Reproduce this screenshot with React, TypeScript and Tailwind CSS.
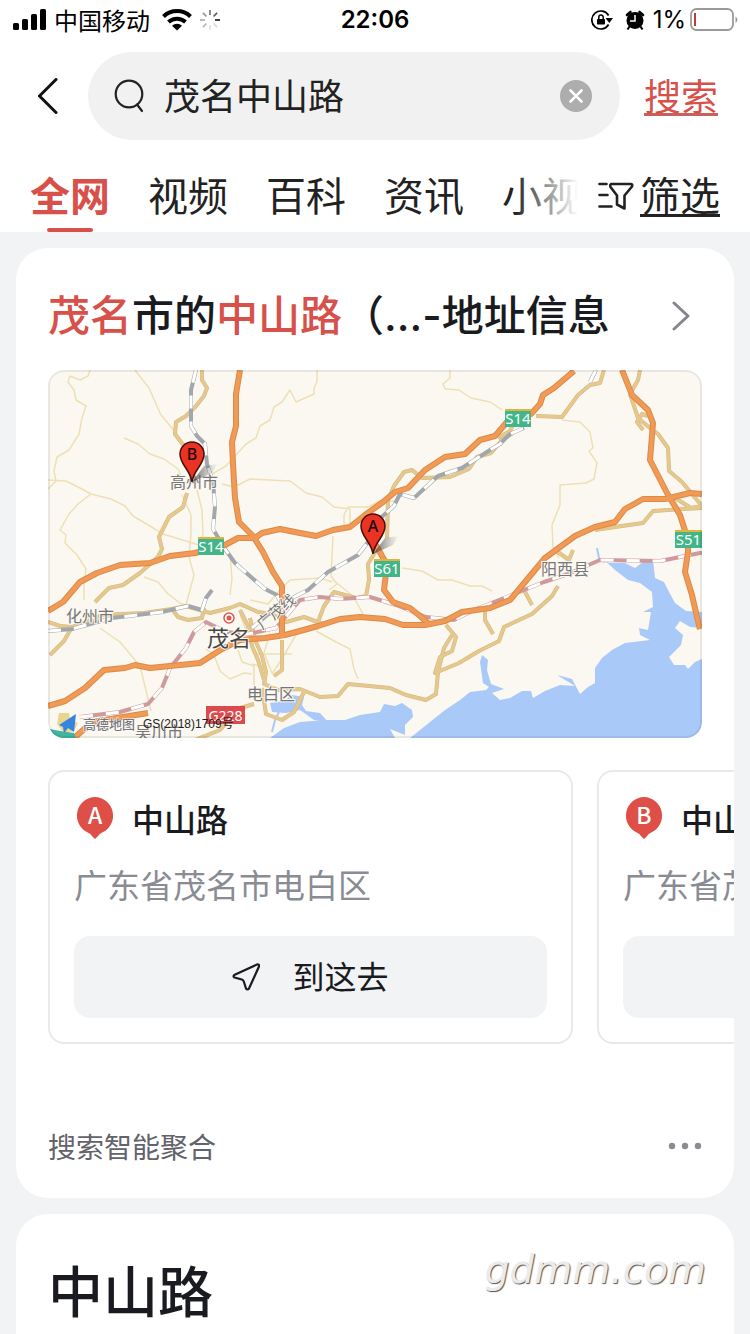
import type { ReactNode } from "react";

interface Place {
  id: string;
  name: string;
  address: string;
}

const PLACES: Place[] = [
  { id: "A", name: "中山路", address: "广东省茂名市电白区" },
  { id: "B", name: "中山路", address: "广东省茂名市高州市" },
];

const TABS = ["全网", "视频", "百科", "资讯", "小视频"];

// map geometry, drawn thin to thick
const MINOR_ROADS = [
  "M70 376l-2 6 6 8 2 10 10 6-4 12-3 16-10 16-12 7-3 14 2 10-8 8M70 376l10 4 8-4 2-6",
  "M135 370l14 18 12 27 15 18 4 8M124 438l14 6 12 10 14 5 14 10 6 14",
  "M48 480l18 1 14 7 11 6 20 5 14 7 8 10 22 13 9 6M91 494l-13 10-9 10-9 16 6 5-1 8 12 12 9 14-2 15 0 16",
  "M182 495l9 20v18l-2 24 5 18-8 30M197 490l5 20 1 25-4 10-36-11",
  "M317 370v12l-3 6v6l-18 8-6-12-8 12-8 5-4 13-10 6-4 12-10 6-20 22-14 8",
  "M222 484l12 3 16-8 40 2 16 12 16 4 12 10 16 2v20h-6v-14l4-8h20l12-6 18 0",
  "M450 370v8l-7 6 2 5 14 1 12 8 19 4 12 8M562 420l18 2 10 10 3 16-4 3 8 12-3 16-8 4-26 2 0 20-8 20 1 22 6 11",
  "M333 536l-2 40 6 8-8 6M333 580l20 16 10 18M402 568l20 3 16 9 14 0 18 6 12 0 10 5",
  "M144 577l14 5 10 12 12 9 12 6M100 628l20 14 20 24 11 45M220 540l10 14 2 25-2 16",
  "M206 649l8 6 6 16 10 8 14-6 8 1M250 600l18 4 10-12 12-12 30-2 12 4M238 650l4 12 12 4v34",
  "M270 633l-6 20 8 20M300 628l-20 34-8 12M256 654h36M316 631l22 12 12 6 4 20 4 10M252 664l14 4v16M240 615l8 20",
];

const COUNTY_ROADS = [
  "M202 370l0 10 5 8-3 8-8 10-10 10-10 6-1 12 9 12 5 8",
  "M187 493l-4 14-14 10-10 20 3 12-4 8-18 16-17 12-14 3-14 14",
  "M48 622l12 4 12 1-8 14-14 14M72 627l30-12 42-2 28-4 6 8 10 3 14-2 2-10",
  "M172 609l14-3 24 7 20-5 10-4 18 8 14 2 14 8 18-5 22 8",
  "M250 618l6 24 6 14 4 16-2 12 14 6 22-1 20 8 18-1 10-12 42 4 16 7 20 5 10-6 2-22 6-24 8-13",
  "M240 610l8 16 4 20 6 14 6 20M282 640l0 30-8 6M262 688l4 26 16 6 12-8 10-20",
  "M318 622l6-16 10-14 22 6 10-2 3-16-1-16 8-13M387 538l1-38 6-14 10-14 8-2 10 8 28-1 19-8 8-12 14-4 12-14 10-6",
  "M498 438l12-7 6-12M536 416l26 1 16-22 12-10 10-2 4-13M640 370l-2 10-8 14 8 24 12 10 8 6 10 14 1 22M643 430l-6-8 5-8 6 2",
  "M668 470l14 12 20 24M675 498l16 10 11-2",
  "M595 530l20-3 28-4 10-12 30-2 19-1M446 625l10 12-4 14-12 6-5 16 24-10 20-12 20-10 5-14 28-13 20-18 6-10",
  "M523 588l9 17M485 610v10l8 14M555 550l14 10 4-10",
  "M190 742l30-12 20-22 14-4",
];

const HIGHWAYS = [
  "M240 370l-4 24v32l-4 16 1 22 2 34 4 24 14 14 10 16 10 20 9 14v52",
  "M48 611l15-9 17-20 17-9 23-8 30-2 20-7 25-3 30-8 13-7h17l7-5 18-4 20 4 16 3 17-6 17-3 15-12 18-13 12-10 13-4 17-18 20-13 20-3 15-14 15-4 12-14 24-8 9-10 3-9 11-7 20-17",
  "M622 370l10 25 16 15 5 13-3 37 17 33 13 22 8 25v12l-3 20 7 23 5 22 3 12",
  "M702 494l-12-1-25 6h-22l-18 10-10 13-20 5-20 9-15 11-15 11-20 24-15 18-20 8-28 4-17 9-20 4h-22l-18-6-25-2-20 2-22 7-18 5-15 4-20 3-25 2-18 9-22 14-20 2-30 3-15-3-10 3-21 2-19 18-20 13-17 5",
  "M376 545l11 20-3 25 9 12 17 6 10 8 10 9",
  "M72 740l20-18 56-9",
];

const RAILS = [
  { d: "M196 370l-5 20v36l6 10 8 8 2 20 6 18 2 25-2 22 12 20 10 14 16 14 14 12 12 6 8 16", color: "#a2a7ad" },
  { d: "M48 631l24-2 40-11 50-6 26-6 14 4 4-12 6-8M252 628l28-24 28-14 20-18 30-17 14-18 4-15 18-16 6-12 14 4 24-22 24-8 28-18 10-6 10-10 14-6M590 382l6-12", color: "#a2a7ad" },
  { d: "M80 717l40-5 28-8 14-16 8-20 16-20 8-16 12-10 20 10 22 2 28-6 24-28 20-3 20 2 30-2 26 8 30 12 28 3 20-10 30-12 40-16 24-8 32-14 60 1 40-8 40-1", color: "#cf9a9c" },
];

const SEA =
  "M270 738L284 728 300 722 325 720 345 720 360 715 380 712 384 704 395 706 402 703 412 710 413 717 405 725 405 735 390 729 395 738 410 738 420 730 430 722 445 710 460 700 470 692 486 690 489 687 483 683 480 662 482 655 488 660 487 670 491 684 504 689 492 693 500 700 510 698 522 691 531 691 533 698 545 691 560 685 575 686 557 675 572 679 580 694 588 687 595 683 595 668 602 658 612 650 625 643 650 640 640 635 639 628 648 630 651 612 643 612 653 607 652 592 640 583 628 580 615 570 600 556 609 563 625 563 635 568 643 562 653 560 655 578 664 582 668 590 675 603 686 611 702 612 702 628 690 627 680 621 675 628 683 635 681 645 669 657 674 665 685 665 688 669 695 662 702 659V738Z";

function Shield({ x, y, label, color, w = 26 }: { x: number; y: number; label: string; color: string; w?: number }) {
  return (
    <g>
      <rect x={x} y={y} width={w} height={18} fill={color} />
      {w < 30 && <rect x={x} y={y} width={w} height={2} fill="#e3b33c" />}
      <text x={x + w / 2} y={y + 15} textAnchor="middle" fontSize={w < 30 ? 15 : 14} fill="#fff">
        {label}
      </text>
    </g>
  );
}

function MapPin({ x, y, label }: { x: number; y: number; label: string }) {
  return (
    <g transform={`translate(${x} ${y})`}>
      <path d="M0 0L12-16 26-18 20-9Z" fill="url(#pinShadow)" />
      <path d="M0 0C-2-13-12-17-12-28a12 12 0 0 1 24 0C12-17 2-13 0 0Z" fill="#ea3323" stroke="#4a0c08" strokeWidth="1.5" />
      <text y="-22" textAnchor="middle" fontSize="16" fontWeight="500" fill="#1c0504">
        {label}
      </text>
    </g>
  );
}

function MapView() {
  return (
    <svg
      viewBox="48 370 654 368"
      className="block w-full rounded-2xl font-['Noto_Sans','Noto_Sans_CJK_SC',sans-serif]"
      role="img"
      aria-label="地图"
    >
      <defs>
        <linearGradient id="pinShadow">
          <stop offset="0" stopColor="#444" stopOpacity="0.8" />
          <stop offset="1" stopColor="#777" stopOpacity="0" />
        </linearGradient>
      </defs>
      <rect x="48" y="370" width="654" height="368" fill="#fbf8f1" />
      <path d={SEA} fill="#a9c9f8" />
      <path d="M270 703l14-2 8-6 12 2-2 8 4 6 14 2 8 9-14-2-14-10-14 3-14-1z" fill="#a9c9f8" />
      <path d="M279 712l-4 8-3 12M597 548l2 10 6 4" fill="none" stroke="#a9c9f8" strokeWidth="2" />
      <g fill="none" strokeLinejoin="round">
        <g stroke="#eee0b4" strokeWidth="1.5">
          {MINOR_ROADS.map((d) => <path key={d} d={d} />)}
        </g>
        <g stroke="#d6b877" strokeWidth="4">
          {COUNTY_ROADS.map((d) => <path key={d} d={d} />)}
        </g>
        <g stroke="#e4c88f" strokeWidth="3">
          {COUNTY_ROADS.map((d) => <path key={d} d={d} />)}
        </g>
        {RAILS.map((r) => (
          <g key={r.d}>
            <path d={r.d} stroke={r.color} strokeWidth="4" />
            <path d={r.d} stroke="#fff" strokeWidth="3" strokeDasharray="13 13" />
          </g>
        ))}
        <g stroke="#dd8a48" strokeWidth="6">
          {HIGHWAYS.map((d) => <path key={d} d={d} />)}
        </g>
        <g stroke="#f09a55" strokeWidth="4">
          {HIGHWAYS.map((d) => <path key={d} d={d} />)}
        </g>
      </g>
      <Shield x={505} y={409} label="S14" color="#42b58a" />
      <Shield x={198} y={537} label="S14" color="#42b58a" />
      <Shield x={374} y={559} label="S61" color="#42b58a" />
      <Shield x={675} y={530} label="S51" color="#42b58a" w={27} />
      <Shield x={206} y={706} label="G228" color="#dc4a4c" w={39} />
      <circle cx="229" cy="618" r="5" fill="#fff" stroke="#e0584c" strokeWidth="1.5" />
      <circle cx="229" cy="618" r="2.5" fill="#e0584c" />
      <g fill="#75767a" stroke="#fbf8f0" strokeWidth="2" paintOrder="stroke" fontSize="16">
        <text x="170" y="488">高州市</text>
        <text x="66" y="622">化州市</text>
        <text x="541" y="575">阳西县</text>
        <text x="247" y="700">电白区</text>
        <text x="135" y="738">吴川市</text>
        <text x="207" y="646" fontSize="22" fill="#45464a">茂名</text>
        <text x="262" y="630" fontSize="15" transform="rotate(-39 262 630)">广茂线</text>
      </g>
      <MapPin x={192} y={482} label="B" />
      <MapPin x={373} y={554} label="A" />
      <g>
        <path d="M57 724l2-11h10l1 6 8 4-4 8-10 2z" fill="#e9d68e" />
        <path d="M50 729l10 2 14 2 2 5H55z" fill="#41b5a0" />
        <path d="M59 725l17-11-2 18-6-4-4 5-1-6z" fill="#3584e0" />
        <text x="83" y="729" fontSize="13" fontWeight="500" fill="#77777a" stroke="#fff" strokeWidth="1" paintOrder="stroke">
          高德地图
        </text>
        <text x="143" y="728" fontSize="12" fill="#222" className="font-['Liberation_Sans','Noto_Sans_CJK_SC',sans-serif]">
          GS(2018)1709号
        </text>
      </g>
      <rect x="49" y="371" width="652" height="366" rx="15" fill="none" stroke="#000" strokeOpacity="0.07" strokeWidth="2" />
    </svg>
  );
}

function StatusBar() {
  return (
    <div className="grid h-10 grid-cols-[1fr_auto_1fr] items-center pr-3 pl-3 text-2xl leading-10 text-black">
      <div className="flex items-center gap-2">
        <svg viewBox="0 0 34 22" className="h-[22px] w-[34px]" aria-hidden="true">
          <rect x="1" y="14" width="6" height="7" rx="1.5" />
          <rect x="10" y="10" width="6" height="11" rx="1.5" />
          <rect x="19" y="5" width="6" height="16" rx="1.5" />
          <rect x="28" y="0" width="6" height="21" rx="1.5" />
        </svg>
        <span>中国移动</span>
        <svg viewBox="0 0 30 22" className="ml-1 h-[22px] w-[30px]" aria-hidden="true">
          <path d="M1.500 7.500a19.500 19.500 0 0 1 27 0" fill="none" stroke="#000" strokeWidth="4" />
          <path d="M6.500 13a12.500 12.500 0 0 1 17 0" fill="none" stroke="#000" strokeWidth="4" />
          <path d="M15 21.500l-5-4.800a7.200 7.200 0 0 1 10 0z" />
        </svg>
        <svg viewBox="-10 -10 20 20" className="size-5" aria-hidden="true">
          {[1, 0.15, 0.12, 0.3, 0.35, 0.45, 0.6, 0.7].map((opacity, i) => (
            <path key={i} d="M5 0h5" stroke="#111" strokeWidth="1.600" opacity={opacity} transform={`rotate(${i * 45})`} />
          ))}
        </svg>
      </div>
      <span className="font-[Inter,sans-serif] font-semibold">22:06</span>
      <div className="flex items-center justify-end gap-2">
        <svg viewBox="0 0 22 20" className="h-5 w-[22px]" aria-hidden="true">
          <path d="M17.600 5.500A9 9 0 1 0 17.600 14.500" fill="none" stroke="#000" strokeWidth="1.700" />
          <path d="M14.500 8h7.500l-3.700 5z" />
          <rect x="6" y="9" width="8" height="5.500" rx="0.800" />
          <path d="M7.800 9V7.200a2.200 2.200 0 0 1 4.400 0V9" fill="none" stroke="#000" strokeWidth="1.500" />
        </svg>
        <svg viewBox="0 0 20 20" className="ml-1 size-5" aria-hidden="true">
          <circle cx="10" cy="10.500" r="8.500" />
          <path d="M2 5L5.500 2M18 5L14.500 2" stroke="#000" strokeWidth="2.600" strokeLinecap="round" />
          <path d="M4.500 16.500l-2 3M15.500 16.500l2 3" stroke="#000" strokeWidth="2" />
          <path d="M10 5v6H5" fill="none" stroke="#fff" strokeWidth="1.500" />
        </svg>
        <span className="font-[Inter,sans-serif]">1%</span>
        <svg viewBox="0 0 48 24" className="-ml-1 h-6 w-12" aria-hidden="true">
          <rect x="1" y="1" width="42" height="21" rx="5.500" fill="none" stroke="#9a9a9a" strokeWidth="1.800" />
          <rect x="4" y="5" width="2" height="13" fill="#c03a35" />
          <path d="M45.500 8.500c2.500 1.500 2.500 5 0 6.500z" fill="#9a9a9a" />
        </svg>
      </div>
    </div>
  );
}

function SearchBar() {
  return (
    <form className="flex items-center px-8 pt-3">
      <button type="button" aria-label="返回" className="mr-6 flex size-8 items-center justify-center">
        <svg viewBox="0 0 20 36" className="h-9 w-5" fill="none" stroke="#111" strokeWidth="3" strokeLinecap="round" strokeLinejoin="round">
          <path d="M18 1.500L1.500 18 18 34.500" />
        </svg>
      </button>
      <div className="flex h-[88px] min-w-0 flex-1 items-center rounded-full bg-[#f1f1f1] pr-7 pl-[26px]">
        <svg viewBox="0 0 32 34" className="h-[34px] w-8 shrink-0" fill="none" stroke="#222" strokeWidth="2.200" strokeLinecap="round" aria-hidden="true">
          <circle cx="15" cy="15" r="13.300" />
          <path d="M23 25.500l5 6.500" />
        </svg>
        <input
          aria-label="搜索词"
          defaultValue="茂名中山路"
          className="ml-[18px] h-16 min-w-0 flex-1 bg-transparent pb-1 text-4xl text-[#222] outline-none"
        />
        <button type="button" aria-label="清除" className="shrink-0">
          <svg viewBox="0 0 32 32" className="block size-8">
            <circle cx="16" cy="16" r="16" fill="#adadad" />
            <path d="M10.500 10.500l11 11M21.500 10.500l-11 11" stroke="#fff" strokeWidth="2.600" strokeLinecap="round" />
          </svg>
        </button>
      </div>
      <button type="submit" className="ml-6 border-b-[3px] border-[#c9605a] text-[37px] leading-9 text-[#d8504a]">
        搜索
      </button>
    </form>
  );
}

function TabBar() {
  return (
    <div className="flex h-[92px] items-start px-[30px] text-[40px] leading-[56px] text-[#222]">
      <nav className="relative mr-5 flex h-[92px] min-w-0 flex-1 gap-[38px] overflow-hidden pt-[26px]">
        {TABS.map((tab, i) => (
          <a
            key={tab}
            href="#"
            className={
              i === 0
                ? "flex shrink-0 flex-col items-center justify-between font-bold text-[#d8504a]"
                : "shrink-0"
            }
          >
            {tab}
            {i === 0 && <span className="h-1 w-[46px] rounded-full bg-[#d8504a]" />}
          </a>
        ))}
        <span className="absolute inset-y-0 right-0 w-16 bg-linear-to-r from-white/0 to-white" />
      </nav>
      <button type="button" className="mt-[34px] flex items-center gap-1.5">
        <svg viewBox="0 0 36 28" className="h-7 w-9" fill="none" stroke="#222" strokeWidth="2.600" strokeLinecap="round" strokeLinejoin="round" aria-hidden="true">
          <path d="M1.500 2h7M1.500 13h8M1.500 24.500h12" />
          <path d="M14 2h18.500q2.500 0 1.500 2.500l-7.500 9v13l-7.500-4v-9l-6.500-8.500Q11.500 2 14 2z" />
        </svg>
        <span className="border-b-[3px] border-[#222] leading-10">筛选</span>
      </button>
    </div>
  );
}

function PlaceCard({ place }: { place: Place }) {
  return (
    <article className="w-[525px] shrink-0 rounded-2xl border-2 border-[#e9e9eb] px-6 pt-[22px] pb-6">
      <div className="flex h-12 items-center gap-4">
        <svg viewBox="0 0 44 48" className="h-12 w-[42px]" aria-hidden="true">
          <path d="M22 2a19.500 19.500 0 0 1 8 37q-3.500 1.500-5 4l-3 3-3-3q-1.500-2.500-5-4A19.500 19.500 0 0 1 22 2z" fill="#de4f48" />
          <text x="22" y="30" textAnchor="middle" fontSize="24" fontWeight="500" fill="#fff">
            {place.id}
          </text>
        </svg>
        <h3 className="text-[32px] font-medium">{place.name}</h3>
      </div>
      <p className="mt-[18px] text-[33px] leading-12 whitespace-nowrap text-[#8a8b93]">{place.address}</p>
      <button
        type="button"
        className="mt-7 flex h-[82px] w-full items-center justify-center gap-8 rounded-2xl bg-[#f2f3f5] text-[32px]"
      >
        <svg viewBox="0 0 28 28" className="size-7" fill="none" stroke="#1a1b21" strokeWidth="2.200" strokeLinejoin="round" aria-hidden="true">
          <path d="M2.200 12L25 1.500q2.500-.5 2 2L17 25.500q-1.500 2-3 0l-2.200-7q-.5-1.500-2-2L2.500 14.500q-1.800-1.200-.3-2.500z" />
        </svg>
        <span className="pb-1">到这去</span>
      </button>
    </article>
  );
}

function Highlight({ children }: { children: ReactNode }) {
  return <em className="text-[#d8504a] not-italic">{children}</em>;
}

export default function App() {
  return (
    <div className="relative flex min-h-screen flex-col overflow-hidden bg-[#f2f3f5] font-[Noto_Sans_CJK_SC,sans-serif] text-[#1a1b21]">
      <header className="bg-white">
        <StatusBar />
        <SearchBar />
        <TabBar />
      </header>
      <main className="flex flex-1 flex-col gap-4 px-4 pt-4">
        <section className="rounded-[32px] bg-white pt-[38px] pb-7">
          <a href="#" className="flex items-center justify-between pr-11 pl-8">
            <h2 className="font-[Inter,Noto_Sans_CJK_SC,sans-serif] text-[42px] leading-[60px] font-medium">
              <Highlight>茂名</Highlight>市的<Highlight>中山路</Highlight>（...-地址信息
            </h2>
            <svg viewBox="0 0 18 30" className="h-[30px] w-[18px]" fill="none" stroke="#85868d" strokeWidth="3" strokeLinecap="round" strokeLinejoin="round" aria-hidden="true">
              <path d="M2 2l14 13L2 28" />
            </svg>
          </a>
          <div className="mt-6 px-8">
            <MapView />
          </div>
          <div className="mt-8 flex gap-6 overflow-hidden pl-8">
            {PLACES.map((p) => (
              <PlaceCard key={p.id} place={p} />
            ))}
          </div>
          <footer className="mt-[78px] flex items-center justify-between px-8">
            <span className="text-[28px] leading-12 text-[#62636b]">搜索智能聚合</span>
            <button type="button" aria-label="更多">
              <svg viewBox="0 0 34 8" className="h-2 w-[34px]" fill="#8a8b93">
                <circle cx="4" cy="4" r="3.200" />
                <circle cx="17" cy="4" r="3.200" />
                <circle cx="30" cy="4" r="3.200" />
              </svg>
            </button>
          </footer>
        </section>
        <section className="flex-1 rounded-t-[32px] bg-white px-8 pt-9">
          <h1 className="text-[55px] leading-[76px] font-medium">中山路</h1>
        </section>
      </main>
      <span className="absolute right-11 bottom-9 font-['DejaVu_Sans',sans-serif] text-[39px] leading-[56px] text-[#ebebeb] italic [text-shadow:1px_1px_1px_#555]">
        gdmm.com
      </span>
    </div>
  );
}
